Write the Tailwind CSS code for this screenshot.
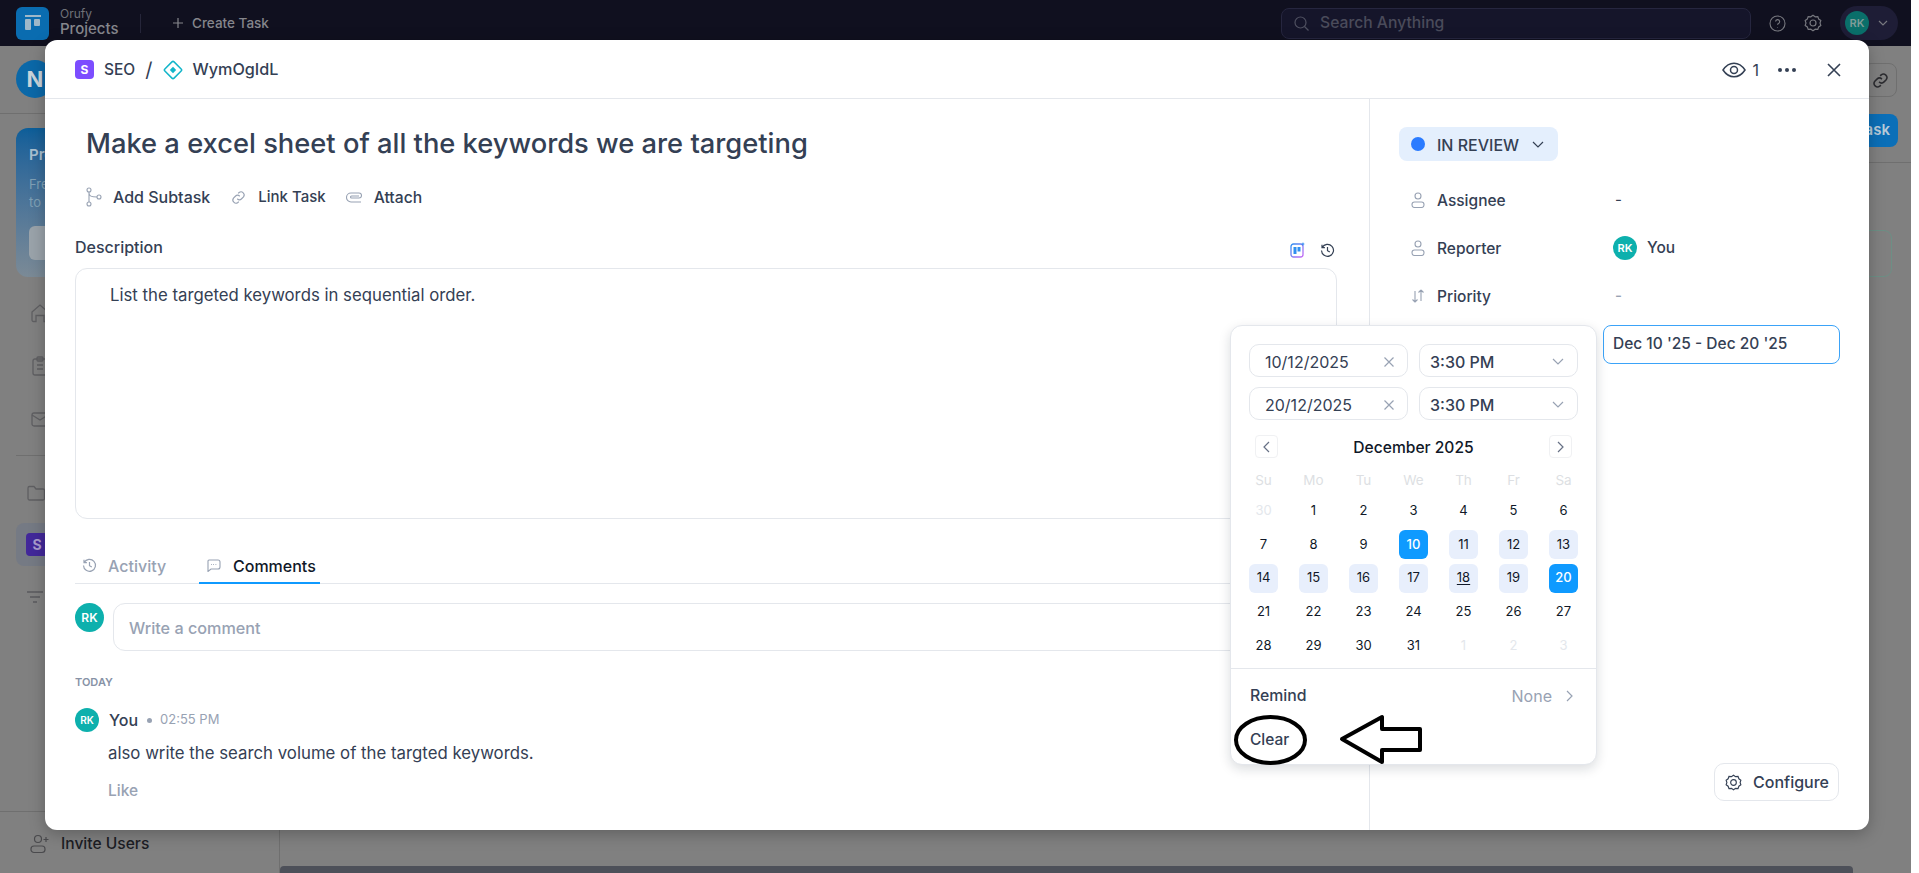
<!DOCTYPE html>
<html>
<head>
<meta charset="utf-8">
<script src="https://cdn.jsdelivr.net/npm/@tailwindcss/browser@4"></script>
</head>
<body class="bg-white overflow-hidden font-['Inter',sans-serif]">
<div class="relative w-[1911px] h-[873px] flex flex-col bg-[#808080] overflow-hidden">
  <!-- top bar -->
  <header class="h-[46px] shrink-0 bg-[#10101f] flex items-center pl-4 pr-[13px]">
    <div class="w-[33px] h-[33px] rounded-md bg-[#0a6cb0] flex items-center justify-center">
      <svg width="20" height="20" viewBox="0 0 20 20" fill="#9fb8c9"><rect x="2" y="2" width="16" height="2"/><rect x="2" y="6" width="6" height="11" rx="1"/><rect x="11" y="6" width="6" height="7" rx="1"/></svg>
    </div>
    <div class="ml-[11px] flex flex-col w-[80px] -mt-[3px]">
      <span class="text-[12px] leading-[14px] text-[#6f7078]">Orufy</span>
      <span class="text-[15px] leading-[16px] font-medium text-[#85868c]">Projects</span>
    </div>
    <div class="w-px h-[19px] bg-[#26263a]"></div>
    <svg class="ml-[31px]" width="12" height="12" viewBox="0 0 12 12" stroke="#85868c" stroke-width="1.2"><path d="M6 1v10M1 6h10"/></svg>
    <span class="ml-[8px] text-[13.500px] font-medium text-[#85868c]">Create Task</span>
    <div class="ml-auto w-[470px] h-[31px] rounded-lg border border-[#26263f] bg-[#15152a] flex items-center pl-[11px]">
      <svg width="17" height="17" viewBox="0 0 17 17" fill="none" stroke="#4f5060" stroke-width="1.2"><circle cx="7.5" cy="7.5" r="5.5"/><path d="M11.5 11.5l4 4"/></svg>
      <span class="ml-[10px] text-[15.700px] font-medium text-[#4a4b5a]">Search Anything</span>
    </div>
    <svg class="ml-[18px]" width="17" height="17" viewBox="0 0 17 17" fill="none" stroke="#77787f" stroke-width="1.1"><circle cx="8.5" cy="8.5" r="7.5"/><path d="M6.6 6.6a2 2 0 1 1 2.9 1.8c-.6.3-1 .7-1 1.4M8.5 12v.6"/></svg>
    <svg class="ml-[18px]" width="18" height="18" viewBox="0 0 18 18" fill="none" stroke="#77787f" stroke-width="1.2"><path d="M9 1.300l2.200 1.500 2.600-.2.9 2.500 2.100 1.500L16 9l.8 2.400-2.100 1.500-.9 2.500-2.600-.2L9 16.700l-2.200-1.500-2.600.2-.9-2.500-2.100-1.500L2 9l-.8-2.400 2.100-1.500.9-2.500 2.600.2z"/><circle cx="9" cy="9" r="3"/></svg>
    <div class="ml-[18px] w-[58px] h-[34px] rounded-full bg-[#1e1d36] flex items-center pl-[5px]">
      <div class="w-6 h-6 rounded-full bg-[#0a6f6a] flex items-center justify-center text-[11px] font-semibold text-[#7f9c99]">RK</div>
      <svg class="ml-[9px]" width="10" height="6" viewBox="0 0 10 6" fill="none" stroke="#77787f" stroke-width="1.2"><path d="M1 1l4 4 4-4"/></svg>
    </div>
  </header>
  <!-- dimmed page -->
  <div class="flex flex-1 min-h-0">
    <aside class="w-[280px] shrink-0 border-r border-[#6f6f6f] flex flex-col">
      <div class="h-[68px] shrink-0 border-b border-[#6f6f6f] pl-4 pt-[14px]">
        <div class="w-[38px] h-[38px] rounded-full bg-[#0b68a8] flex items-center justify-center text-[22px] font-bold text-[#c9d3da]">N</div>
      </div>
      <div class="mt-[14px] mx-4 h-[149px] rounded-xl bg-gradient-to-b from-[#0b5e99] to-[#7b8a96] px-[13px] pt-[16px]">
        <div class="text-[15px] font-semibold text-[#a9c0d0]">Pro plan</div>
        <div class="mt-2 text-[13px] leading-[18px] text-[#7fa0b5]">Free trial ends<br>to upgrade</div>
        <div class="mt-[15px] h-[34px] rounded-md bg-[#9aa3aa]"></div>
      </div>
      <div class="pl-[30px] pt-[26px] flex flex-col gap-[33px] text-[#5f5f62]">
        <svg width="20" height="20" viewBox="0 0 20 20" fill="none" stroke="currentColor" stroke-width="1.3"><path d="M2 9l8-7 8 7v8a1.5 1.5 0 0 1-1.5 1.5H14v-6H6v6H3.500A1.500 1.500 0 0 1 2 17z"/></svg>
        <svg width="20" height="20" viewBox="0 0 20 20" fill="none" stroke="currentColor" stroke-width="1.3"><rect x="3" y="3" width="14" height="16" rx="2"/><rect x="7" y="1" width="6" height="4" rx="1"/><path d="M7 9h6M7 13h6"/></svg>
        <svg width="20" height="20" viewBox="0 0 20 20" fill="none" stroke="currentColor" stroke-width="1.3"><rect x="2" y="4" width="16" height="13" rx="2"/><path d="M2 6l8 5 8-5"/></svg>
      </div>
      <div class="mt-[26px] mx-4 h-px bg-[#6f6f6f]"></div>
      <div class="pl-[26px] pt-[27px] text-[#5f5f62]">
        <svg width="20" height="20" viewBox="0 0 20 20" fill="none" stroke="currentColor" stroke-width="1.3"><path d="M2 5a1.500 1.500 0 0 1 1.500-1.500H8l2 2.500h7A1.500 1.500 0 0 1 18.500 7.500v8a1.500 1.500 0 0 1-1.500 1.500H3.500A1.500 1.500 0 0 1 2 15.500z"/></svg>
      </div>
      <div class="mt-[20px] mx-4 h-[43px] rounded-lg bg-[#757a84] pl-[10px] flex items-center">
        <div class="w-[22px] h-[23px] rounded bg-[#42289a] flex items-center justify-center text-[14px] font-bold text-[#a99ccc]">S</div>
      </div>
      <div class="pl-[26px] pt-[24px] text-[#5a5a5d]">
        <svg width="18" height="14" viewBox="0 0 18 14" fill="none" stroke="currentColor" stroke-width="1.5"><path d="M1 2h16M4 7h10M7 12h4"/></svg>
      </div>
      <div class="mt-auto border-t border-[#6f6f6f] h-[62px] pl-[30px] pt-[21px] flex items-start gap-[11px]">
        <svg class="mt-[1px]" width="20" height="20" viewBox="0 0 20 20" fill="none" stroke="#4a4a4d" stroke-width="1.2"><circle cx="8" cy="5" r="3.500"/><rect x="1" y="12" width="14" height="6.500" rx="3"/><path d="M16 3v5M13.500 5.500h5"/></svg>
        <span class="text-[15.600px] font-medium leading-[22px] text-[#1c1d24]">Invite Users</span>
      </div>
    </aside>
    <main class="flex-1 flex flex-col items-end">
      <div class="mt-[17px] mr-[14px] w-[34px] h-[34px] rounded-lg border border-[#6f6f6f] flex items-center justify-center">
        <svg width="17" height="17" viewBox="0 0 24 24" fill="none" stroke="#2c2c30" stroke-width="2.200"><path d="M10 14a5 5 0 0 0 7 0l3-3a5 5 0 0 0-7-7l-1.500 1.500"/><path d="M14 10a5 5 0 0 0-7 0l-3 3a5 5 0 0 0 7 7l1.500-1.500"/></svg>
      </div>
      <div class="mt-[17px] mr-[13px] h-[33px] w-[150px] rounded-lg bg-[#0b6fb8] flex items-center justify-end pr-[8px] text-[15px] font-semibold text-[#b8cad8]">Create Task</div>
      <div class="mt-[15px] h-px w-full bg-[#6f6f6f]"></div>
      <div class="mt-[67px] mr-[19px] w-[1500px] h-[47px] rounded-lg border border-[#6d8f85]"></div>
      <div class="mt-auto mr-[58px] h-[7px] w-[1573px] rounded-t bg-[#4d5059]"></div>
    </main>
  </div>

  <!-- modal -->
  <div class="absolute left-[45px] top-[40px] w-[1824px] h-[790px] rounded-xl bg-white shadow-[0_4px_16px_rgba(0,0,0,0.25)] flex flex-col text-[#344054]">
    <div class="h-[59px] shrink-0 border-b border-[#e4e7ec] flex items-center pl-[30px] pr-[27px] pt-[1px]">
      <div class="w-[19px] h-[19px] rounded bg-[#7c4dff] flex items-center justify-center text-[12px] font-bold text-white">S</div>
      <span class="ml-[10px] text-[15.500px] font-medium">SEO</span>
      <span class="ml-[10px] text-[20px] font-normal leading-none">/</span>
      <svg class="ml-[11px]" width="20" height="20" viewBox="0 0 20 20" fill="none"><rect x="3.500" y="3.500" width="13" height="13" rx="1.500" transform="rotate(45 10 10)" stroke="#12b5c9" stroke-width="1.500"/><rect x="7.750" y="7.750" width="4.500" height="4.500" transform="rotate(45 10 10)" fill="#12b5c9"/></svg>
      <span class="ml-[9px] text-[16.200px] font-medium">WymOgIdL</span>
      <svg class="ml-auto" width="24" height="16" viewBox="0 0 24 16" fill="none" stroke="#344054" stroke-width="1.500"><path d="M1 8c3-4.500 6.500-6.800 11-6.800S20 3.500 23 8c-3 4.500-6.500 6.800-11 6.800S4 12.500 1 8z"/><circle cx="12" cy="8" r="3.500"/></svg>
      <span class="ml-[6px] text-[16px]">1</span>
      <svg class="ml-[18px]" width="20" height="6" viewBox="0 0 20 6" fill="#344054"><circle cx="3" cy="3" r="2"/><circle cx="10" cy="3" r="2"/><circle cx="17" cy="3" r="2"/></svg>
      <svg class="ml-[29px]" width="16" height="16" viewBox="0 0 16 16" fill="none" stroke="#344054" stroke-width="1.600"><path d="M2 2l12 12M14 2L2 14"/></svg>
    </div>
    <div class="flex flex-1 min-h-0">
      <!-- left column -->
      <div class="w-[1325px] shrink-0 border-r border-[#e4e7ec] pl-[30px] pr-[32px] pt-[27px]">
        <h1 class="pl-[11px] text-[27.300px] leading-[36px] font-medium text-[#344054]">Make a excel sheet of all the keywords we are targeting</h1>
        <div class="mt-[23px] pl-[11px] h-6 flex items-center font-medium">
          <svg width="16" height="20" viewBox="0 0 16 20" fill="none" stroke="#98a2b3" stroke-width="1.100"><circle cx="3" cy="3" r="2"/><circle cx="3" cy="17" r="2"/><circle cx="13" cy="10" r="2"/><path d="M3 5v10M3 6c0 3 2 4 8 4"/></svg>
          <span class="ml-[11px] text-[16px]">Add Subtask</span>
          <svg class="ml-[21px]" width="15" height="15" viewBox="0 0 24 24" fill="none" stroke="#98a2b3" stroke-width="1.800"><path d="M10 14a5 5 0 0 0 7 0l3-3a5 5 0 0 0-7-7l-1.500 1.500"/><path d="M14 10a5 5 0 0 0-7 0l-3 3a5 5 0 0 0 7 7l1.500-1.500"/></svg>
          <span class="ml-[12px] text-[15px]">Link Task</span>
          <svg class="ml-[20px]" width="16" height="14" viewBox="0 0 16 14" fill="none" stroke="#98a2b3" stroke-width="1.100"><path d="M15 12H5a4.500 4.500 0 0 1 0-9h8a2.500 2.500 0 0 1 0 5H5.500a1 1 0 0 1 0-2H13"/></svg>
          <span class="ml-[12px] text-[15.700px] pt-[1px]">Attach</span>
        </div>
        <div class="mt-[26px] h-6 flex items-center justify-between pr-[1px]">
          <span class="text-[16px] font-medium">Description</span>
          <div class="flex items-center gap-[15px] mr-[1px] mt-[6px]">
            <svg width="15" height="16" viewBox="0 0 15 16" fill="none"><defs><linearGradient id="ai" x1="0" y1="0" x2="1" y2="1"><stop offset="0" stop-color="#2f8ff0"/><stop offset="1" stop-color="#c86bf5"/></linearGradient></defs><rect x="1" y="2" width="12" height="13" rx="2.500" stroke="url(#ai)" stroke-width="1.300"/><rect x="3.500" y="5" width="3" height="7" fill="#2f8ff0"/><rect x="7.500" y="5" width="3" height="4.500" fill="#2f8ff0"/><path d="M13 0l.6 1.400L15 2l-1.400.6L13 4l-.6-1.400L11 2l1.400-.6z" fill="#2f8ff0"/></svg>
            <svg width="15" height="15" viewBox="0 0 15 15" fill="none" stroke="#344054" stroke-width="1.200"><path d="M2.200 4.500A6 6 0 1 1 1.500 7.500M2 1.800v2.900h2.900M7.500 4v3.700l2.300 1.400"/></svg>
          </div>
        </div>
        <div class="mt-[9px] h-[251px] w-[1262px] rounded-xl border border-[#e4e7ec] pl-[34px] pt-[14px] text-[16.750px] leading-6">List the targeted keywords in sequential order.</div>
        <div class="mt-[30px] w-[1262px] h-[35px] border-b border-[#e4e7ec] flex items-stretch text-[16px] font-medium">
          <div class="ml-[7px] flex items-center gap-[11px] text-[#98a2b3] pb-[1px] w-[117px]">
            <svg width="15" height="15" viewBox="0 0 15 15" fill="none" stroke="#98a2b3" stroke-width="1.200"><path d="M2.200 4.500A6 6 0 1 1 1.500 7.500M2 1.800v2.900h2.900M7.500 4v3.700l2.300 1.400"/></svg>
            <span>Activity</span>
          </div>
          <div class="w-[121px] -mb-px border-b-2 border-[#0f9aff] flex items-center pl-[7px] gap-[12px] text-[#101828]">
            <svg width="15" height="13" viewBox="0 0 15 13" fill="none" stroke="#98a2b3" stroke-width="1.100"><path d="M3 1h9a2 2 0 0 1 2 2v5a2 2 0 0 1-2 2H5l-3 2.500V2a1 1 0 0 1 1-1z"/><path d="M5 5.500h.8M7.200 5.500H8M9.500 5.500h.8"/></svg>
            <span>Comments</span>
          </div>
        </div>
        <div class="mt-[19px] flex gap-[9px] w-[1262px]">
          <div class="w-[29px] h-[29px] rounded-full bg-[#0db0ad] flex items-center justify-center text-[12px] font-semibold text-white">RK</div>
          <div class="flex-1 h-[48px] rounded-xl border border-[#e4e7ec] pl-[15px] pt-[2px] flex items-center text-[16.200px] font-medium text-[#98a2b3]">Write a comment</div>
        </div>
        <div class="mt-[23px] h-4 leading-4 text-[11px] font-semibold text-[#8792a6]">TODAY</div>
        <div class="mt-[18px] flex items-center h-6">
          <div class="w-6 h-6 rounded-full bg-[#0db0ad] flex items-center justify-center text-[10px] font-semibold text-white">RK</div>
          <span class="ml-[10px] text-[16px] font-medium">You</span>
          <span class="ml-[9px] w-[5px] h-[5px] rounded-full bg-[#98a2b3]"></span>
          <span class="ml-[8px] text-[13px] text-[#98a2b3]">02:55 PM</span>
        </div>
        <div class="mt-[9px] pl-[33px] text-[16.800px] leading-6">also write the search volume of the targted keywords.</div>
        <div class="mt-[16px] pl-[33px] text-[15.500px] leading-5 font-medium text-[#98a2b3]">Like</div>
      </div>
      <!-- right column -->
      <div class="flex-1 flex flex-col pl-[29px] pr-[29px] pt-[28px]">
        <div class="w-[159px] h-[34px] rounded-lg bg-[#e4effd] flex items-center pl-3 text-[16px] font-medium">
          <span class="w-[14px] h-[14px] rounded-full bg-[#2a7bff]"></span>
          <span class="ml-[12px] pt-[1px]">IN REVIEW</span>
          <svg class="ml-[13px]" width="12" height="7" viewBox="0 0 12 7" fill="none" stroke="#344054" stroke-width="1.200"><path d="M1 1l5 5 5-5"/></svg>
        </div>
        <div class="mt-[15px] h-12 flex items-center text-[15.500px] font-medium">
          <svg class="ml-[12px]" width="14" height="16" viewBox="0 0 14 16" fill="none" stroke="#98a2b3" stroke-width="1.100"><circle cx="7" cy="4" r="3"/><rect x="1" y="10" width="12" height="5.500" rx="2.500"/></svg>
          <span class="ml-[12px] w-[178px] pt-[1px]">Assignee</span>
          <span class="text-[15px] font-normal">-</span>
        </div>
        <div class="h-12 flex items-center text-[15.500px] font-medium">
          <svg class="ml-[12px]" width="14" height="16" viewBox="0 0 14 16" fill="none" stroke="#98a2b3" stroke-width="1.100"><circle cx="7" cy="4" r="3"/><rect x="1" y="10" width="12" height="5.500" rx="2.500"/></svg>
          <span class="ml-[12px] w-[176px] pt-[1px]">Reporter</span>
          <div class="w-6 h-6 rounded-full bg-[#0db0ad] flex items-center justify-center text-[11px] font-semibold text-white">RK</div>
          <span class="ml-[10px]">You</span>
        </div>
        <div class="h-12 flex items-center text-[15.500px] font-medium">
          <svg class="ml-[12px]" width="14" height="16" viewBox="0 0 14 16" fill="none" stroke="#98a2b3" stroke-width="1.100"><path d="M4 3v11M4 14l-2.500-2.500M4 14l2.500-2.500M10 13V2M10 2L7.500 4.500M10 2l2.500 2.500"/></svg>
          <span class="ml-[12px] w-[178px] pt-[1px]">Priority</span>
          <span class="text-[15px] text-[#98a2b3]">-</span>
        </div>
        <div class="h-12 flex items-center justify-end">
          <div class="w-[237px] h-[39px] rounded-lg border border-[#3ba3f8] flex items-center pl-[9px] text-[15.500px] font-medium">Dec 10 '25 - Dec 20 '25</div>
        </div>
        <div class="mt-auto mb-[29px] mr-[1px] self-end w-[125px] h-[38px] rounded-[10px] border border-[#e4e7ec] flex items-center pl-[10px] gap-[11px] text-[16px] font-medium">
          <svg width="17" height="17" viewBox="0 0 18 18" fill="none" stroke="#344054" stroke-width="1.200"><path d="M9 1.300l2.200 1.500 2.600-.2.900 2.500 2.100 1.500L16 9l.8 2.400-2.100 1.500-.9 2.500-2.600-.2L9 16.700l-2.200-1.500-2.600.2-.9-2.500-2.100-1.500L2 9l-.8-2.400 2.100-1.500.9-2.500 2.600.2z"/><circle cx="9" cy="9" r="3"/></svg>
          <span>Configure</span>
        </div>
      </div>
    </div>

    <!-- date popover -->
    <div class="absolute left-[1185px] top-[285px] w-[367px] h-[440px] rounded-xl bg-white border border-[#e4e7ec] shadow-[0_4px_12px_rgba(16,24,40,0.15)] pt-[18px] text-[#344054]">
      <div class="px-[18px] flex flex-col gap-[10px]">
        <div class="flex gap-[11px]">
          <div class="w-[159px] h-[33px] rounded-[10px] border border-[#e4e7ec] flex items-center pl-[15px] pt-[2px] text-[16px]">10/12/2025
            <svg class="ml-auto mr-[13px]" width="10" height="10" viewBox="0 0 10 10" stroke="#98a2b3" stroke-width="1.200"><path d="M0.500 0.500l9 9M9.500 0.500l-9 9"/></svg></div>
          <div class="w-[159px] h-[33px] rounded-[10px] border border-[#e4e7ec] flex items-center pl-[10px] pt-[2px] text-[16px] font-medium">3:30 PM
            <svg class="ml-auto mr-[13px]" width="12" height="7" viewBox="0 0 12 7" fill="none" stroke="#98a2b3" stroke-width="1.200"><path d="M1 1l5 5 5-5"/></svg></div>
        </div>
        <div class="flex gap-[11px]">
          <div class="w-[159px] h-[33px] rounded-[10px] border border-[#e4e7ec] flex items-center pl-[15px] pt-[2px] text-[16px]">20/12/2025
            <svg class="ml-auto mr-[13px]" width="10" height="10" viewBox="0 0 10 10" stroke="#98a2b3" stroke-width="1.200"><path d="M0.500 0.500l9 9M9.500 0.500l-9 9"/></svg></div>
          <div class="w-[159px] h-[33px] rounded-[10px] border border-[#e4e7ec] flex items-center pl-[10px] pt-[2px] text-[16px] font-medium">3:30 PM
            <svg class="ml-auto mr-[13px]" width="12" height="7" viewBox="0 0 12 7" fill="none" stroke="#98a2b3" stroke-width="1.200"><path d="M1 1l5 5 5-5"/></svg></div>
        </div>
      </div>
      <div class="mt-[15px] mx-[24px] h-[23px] flex items-center justify-between">
        <div class="w-[23px] h-[23px] rounded border border-[#f0f1f3] flex items-center justify-center"><svg width="7" height="12" viewBox="0 0 7 12" fill="none" stroke="#667085" stroke-width="1.200"><path d="M6 1L1 6l5 5"/></svg></div>
        <span class="text-[15.600px] font-medium text-[#101828] pt-[2px]">December 2025</span>
        <div class="w-[23px] h-[23px] rounded border border-[#f0f1f3] flex items-center justify-center"><svg width="7" height="12" viewBox="0 0 7 12" fill="none" stroke="#667085" stroke-width="1.200"><path d="M1 1l5 5-5 5"/></svg></div>
      </div>
      <div class="mt-[12px] mx-[18px] grid grid-cols-[repeat(7,29px)] gap-x-[21px] h-5 items-center justify-items-center text-center text-[13.500px] text-[#dddfe3]">
        <span>Su</span><span>Mo</span><span>Tu</span><span>We</span><span>Th</span><span>Fr</span><span>Sa</span>
      </div>
      <div class="mt-[6px] mx-[18px] grid grid-cols-[repeat(7,29px)] auto-rows-[29px] gap-x-[21px] gap-y-[4.750px] text-[13px] text-[#101828] [&>span]:flex [&>span]:items-center [&>span]:justify-center [&>span]:rounded-md">
        <span class="text-[#e4e7ec]">30</span><span>1</span><span>2</span><span>3</span><span>4</span><span>5</span><span>6</span>
        <span>7</span><span>8</span><span>9</span><span class="bg-[#0f9aff] text-white font-medium">10</span><span class="bg-[#e8effc]">11</span><span class="bg-[#e8effc]">12</span><span class="bg-[#e8effc]">13</span>
        <span class="bg-[#e8effc]">14</span><span class="bg-[#e8effc]">15</span><span class="bg-[#e8effc]">16</span><span class="bg-[#e8effc]">17</span><span class="bg-[#e8effc] underline underline-offset-2">18</span><span class="bg-[#e8effc]">19</span><span class="bg-[#0f9aff] text-white font-medium">20</span>
        <span>21</span><span>22</span><span>23</span><span>24</span><span>25</span><span>26</span><span>27</span>
        <span>28</span><span>29</span><span>30</span><span>31</span><span class="text-[#e4e7ec]">1</span><span class="text-[#e4e7ec]">2</span><span class="text-[#e4e7ec]">3</span>
      </div>
      <div class="mt-[8px] h-px bg-[#e4e7ec]"></div>
      <div class="mt-[15px] pl-[19px] pr-[23px] h-6 flex items-center justify-between text-[15.800px] font-medium">
        <span>Remind</span>
        <span class="flex items-center gap-[14px] font-normal text-[16px] text-[#98a2b3]">None<svg width="7" height="12" viewBox="0 0 7 12" fill="none" stroke="#98a2b3" stroke-width="1.200"><path d="M1 1l5 5-5 5"/></svg></span>
      </div>
      <div class="mt-[22px] px-[19px] h-5 leading-5 text-[15.500px] font-medium">Clear</div>
    </div>
  </div>

  <!-- hand-drawn annotation -->
  <svg class="absolute left-[1230px] top-[710px]" width="200" height="60" viewBox="0 0 200 60" fill="none" stroke="#000" stroke-width="4">
    <ellipse cx="40.500" cy="30" rx="34.500" ry="23"/>
    <path d="M112 29L152 7v12h38v21h-38v12z" stroke-linejoin="round"/>
  </svg>
</div>
</body>
</html>
